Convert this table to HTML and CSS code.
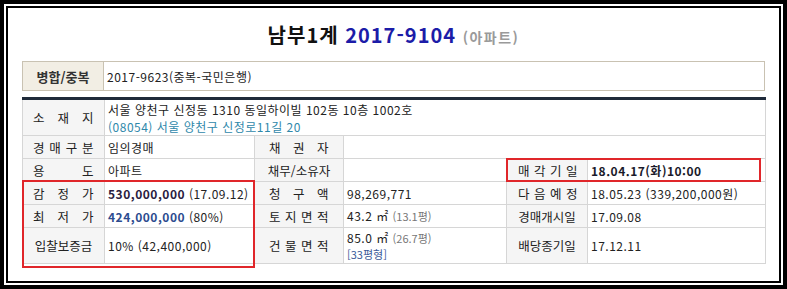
FILE: index.html
```html
<!DOCTYPE html>
<html lang="ko">
<head>
<meta charset="utf-8">
<title>남부1계 2017-9104</title>
<link rel="stylesheet" href="styles.css">
</head>
<body>
<div class="frame">
  <div class="inner">
    <h1 class="title"><span class="court">남부1계</span> <span class="case">2017-9104</span> <span class="kind">(아파트)</span></h1>
    <table class="merge">
      <tr><th>병합/중복</th><td>2017-9623(중복-국민은행)</td></tr>
    </table>
    <div class="info-wrap">
      <table class="info">
        <colgroup>
          <col class="c1"><col class="c2"><col class="c3"><col class="c4"><col class="c5"><col class="c6">
        </colgroup>
        <tr class="r-tall">
          <th class="l1">소 재 지</th>
          <td colspan="5" class="addr"><div class="ln">서울 양천구 신정동 1310 동일하이빌 102동 10층 1002호</div><div class="ln road">(08054) 서울 양천구 신정로11길 20</div></td>
        </tr>
        <tr>
          <th class="l1">경 매 구 분</th><td>임의경매</td>
          <th class="l2">채 권 자</th><td colspan="3"></td>
        </tr>
        <tr>
          <th class="l1">용 도</th><td>아파트</td>
          <th class="l2 ctr">채무/소유자</th><td></td>
          <th class="l3">매 각 기 일</th><td class="bold">18.04.17(화)10:00</td>
        </tr>
        <tr>
          <th class="l1">감 정 가</th><td><b class="appr">530,000,000</b> (17.09.12)</td>
          <th class="l2">청 구 액</th><td>98,269,771</td>
          <th class="l3">다 음 예 정</th><td>18.05.23 (339,200,000원)</td>
        </tr>
        <tr>
          <th class="l1">최 저 가</th><td><b class="min">424,000,000</b> (80%)</td>
          <th class="l2">토 지 면 적</th><td>43.2 ㎡ <span class="sub">(13.1평)</span></td>
          <th class="l3 ctr">경매개시일</th><td>17.09.08</td>
        </tr>
        <tr class="r-tall">
          <th class="l1 ctr">입찰보증금</th><td>10% (42,400,000)</td>
          <th class="l2">건 물 면 적</th><td class="two"><div class="ln1">85.0 ㎡ <span class="sub">(26.7평)</span></div><div class="ln2 pyeong">[33평형]</div></td>
          <th class="l3 ctr">배당종기일</th><td>17.12.11</td>
        </tr>
      </table>
      <div class="mark mark-price"></div>
      <div class="mark mark-date"></div>
    </div>
  </div>
</div>
</body>
</html>
```

FILE: styles.css
```css
html, body {
  margin: 0;
  padding: 0;
  background: #fff;
}

body {
  font-family: "Noto Sans CJK KR", "Noto Sans", sans-serif;
  font-size: 12px;
  color: #222;
}

.frame {
  width: 787px;
  height: 289px;
  box-sizing: border-box;
  border: 4px solid #000;
  padding: 2px;
  background: #fff;
}

.inner {
  height: 100%;
  box-sizing: border-box;
  border: 2px solid #000;
  padding: 0 14px;
}

.title {
  margin: 0;
  padding-top: 13px;
  height: 28px;
  line-height: 28px;
  text-align: center;
  font-size: 20px;
  font-weight: bold;
  white-space: nowrap;
  letter-spacing: 1px;
}

.court { color: #111; }
.case { color: #1c1ca8; }
.kind { color: #9a9a9a; font-size: 14px; letter-spacing: 1.5px; }

.merge {
  margin-top: 12px;
  width: 100%;
  border-collapse: collapse;
  table-layout: fixed;
}

.merge th,
.merge td {
  border: 1px solid #c9c2b2;
  height: 28px;
  padding: 0 3px;
  white-space: nowrap;
}

.merge th {
  width: 74px;
  background: #f2eee4;
  color: #333;
  font-size: 13px;
  font-weight: bold;
  text-align: center;
}

.merge td {
  letter-spacing: 0.5px;
}

.info-wrap {
  position: relative;
  margin-top: 6px;
}

.info {
  width: 100%;
  border-collapse: collapse;
  table-layout: fixed;
  border-top: 3px solid #1f2a3a;
  letter-spacing: 0.5px;
}

.c1 { width: 82px; }
.c2 { width: 150px; }
.c3 { width: 89px; }
.c4 { width: 163px; }
.c5 { width: 81px; }
.c6 { width: 178px; }

.info th,
.info td {
  border: 1px solid #d6d6d6;
  height: 22px;
  padding: 0 3px;
  vertical-align: middle;
  white-space: nowrap;
  line-height: 15px;
}

.info tr.r-tall th,
.info tr.r-tall td {
  height: 35px;
}

.info th {
  background: #f5f5f5;
  font-weight: normal;
  color: #222;
  font-size: 12.5px;
  text-align: justify;
  text-align-last: justify;
}

.info th.l1 { padding: 0 10px 0 10px; }
.info th.l2 { padding: 0 14px; }
.info th.l3 { padding: 0 11px; }
.info th.ctr {
  text-align: center;
  text-align-last: center;
  padding: 0;
  letter-spacing: 0;
}

.info td.addr .ln {
  line-height: 17px;
}

.road { color: #2f88aa; }

.info td.two .ln1 {
  line-height: 17px;
}

.info td.two .ln2 {
  line-height: 15px;
}

.bold { font-weight: bold; color: #1a1a2a; }
.appr { color: #2a2040; }
.min { color: #2d4c8f; }

.sub {
  color: #777;
  font-size: 11px;
  letter-spacing: 0;
}

.pyeong {
  color: #3a5a9a;
  font-size: 11px;
  letter-spacing: 0;
}

.mark {
  position: absolute;
  border: 2px solid #e0262a;
  box-sizing: border-box;
  pointer-events: none;
}

.mark-price {
  left: 0;
  top: 83px;
  width: 233px;
  height: 88px;
}

.mark-date {
  left: 484px;
  top: 61px;
  width: 255px;
  height: 24px;
}
```
